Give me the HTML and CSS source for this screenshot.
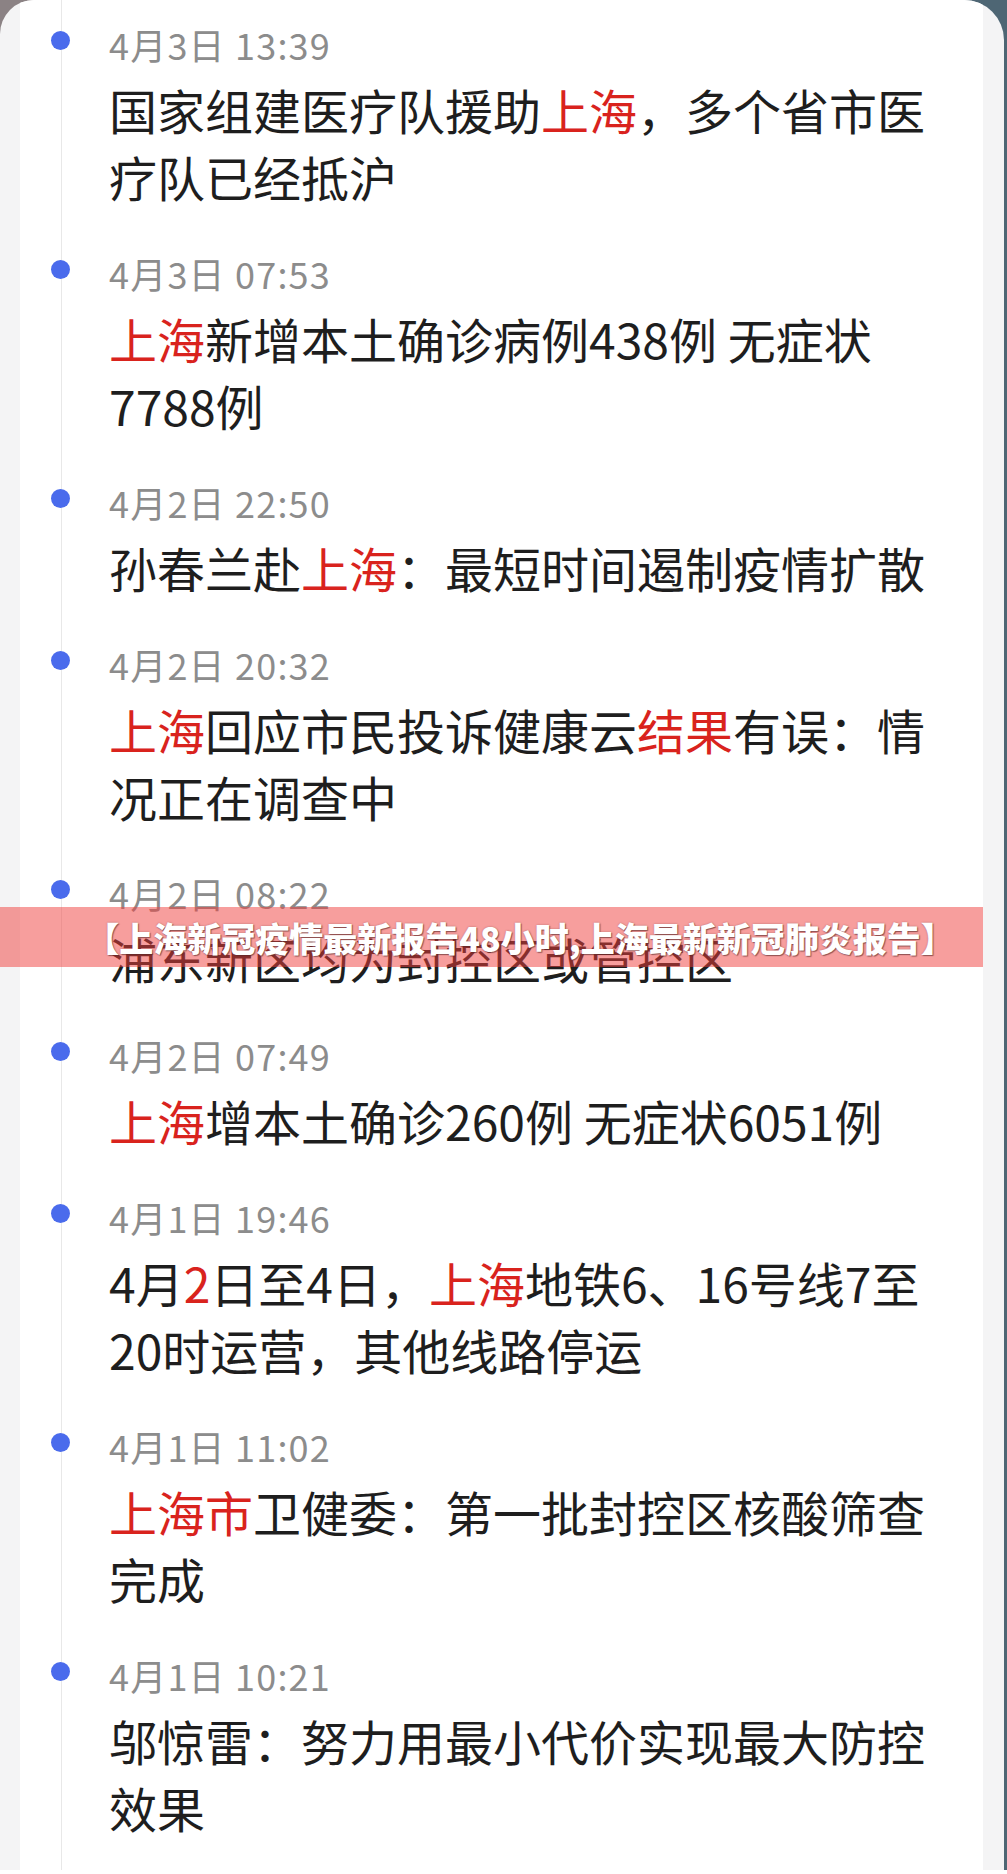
FILE: index.html
```html
<!DOCTYPE html>
<html lang="zh-CN">
<head>
<meta charset="utf-8">
<title>上海新冠疫情最新报告</title>
<link rel="stylesheet" href="styles.css">
</head>
<body>
<div class="screen">
  <div class="card">
    <ul class="list">
      <li class="item">
        <span class="dot"></span>
        <div class="date">4月3日 13:39</div>
        <div class="title">国家组建医疗队援助<span class="hl">上海</span>，多个省市医疗队已经抵沪</div>
      </li>
      <li class="item">
        <span class="dot"></span>
        <div class="date">4月3日 07:53</div>
        <div class="title"><span class="hl">上海</span>新增本土确诊病例438例 无症状7788例</div>
      </li>
      <li class="item">
        <span class="dot"></span>
        <div class="date">4月2日 22:50</div>
        <div class="title">孙春兰赴<span class="hl">上海</span>：最短时间遏制疫情扩散</div>
      </li>
      <li class="item">
        <span class="dot"></span>
        <div class="date">4月2日 20:32</div>
        <div class="title"><span class="hl">上海</span>回应市民投诉健康云<span class="hl">结果</span>有误：情况正在调查中</div>
      </li>
      <li class="item">
        <span class="dot"></span>
        <div class="date">4月2日 08:22</div>
        <div class="title">浦东新区均为封控区或管控区</div>
      </li>
      <li class="item">
        <span class="dot"></span>
        <div class="date">4月2日 07:49</div>
        <div class="title"><span class="hl">上海</span>增本土确诊260例 无症状6051例</div>
      </li>
      <li class="item">
        <span class="dot"></span>
        <div class="date">4月1日 19:46</div>
        <div class="title">4月<span class="hl">2</span>日至4日，<span class="hl">上海</span>地铁6、16号线7至20时运营，其他线路停运</div>
      </li>
      <li class="item">
        <span class="dot"></span>
        <div class="date">4月1日 11:02</div>
        <div class="title"><span class="hl">上海市</span>卫健委：第一批封控区核酸筛查完成</div>
      </li>
      <li class="item">
        <span class="dot"></span>
        <div class="date">4月1日 10:21</div>
        <div class="title">邬惊雷：努力用最小代价实现最大防控效果</div>
      </li>
    </ul>
  </div>
  <div class="banner">【上海新冠疫情最新报告48小时,上海最新新冠肺炎报告】</div>
</div>
</body>
</html>
```
FILE: styles.css
```css
html {
  background: #ffffff;
}
body {
  margin: 0;
  width: 1007px;
  background: linear-gradient(90deg, #8b8284 0, #8b8284 50%, #4e6674 50%, #4e6674 100%) top left / 100% 1870px no-repeat, #ffffff;
  font-family: "Noto Sans CJK SC", "Noto Sans", sans-serif;
}
.screen {
  position: relative;
  width: 1004px;
  height: 1870px;
  overflow: hidden;
  background: #f4f4f5;
  border-radius: 34px 40px 0 0;
  display: flex;
}
.card {
  margin-left: 20px;
  width: 963px;
  background: #ffffff;
}
.list {
  list-style: none;
  margin: 0 0 0 41px;
  padding: 22px 0 0 0;
  border-left: 1px solid #e8e8e8;
  min-height: 100%;
  box-sizing: border-box;
}
.item {
  position: relative;
  padding: 0 34px 41px 47px;
}
.dot {
  position: absolute;
  left: -11px;
  top: 9px;
  width: 19px;
  height: 19px;
  border-radius: 50%;
  background: #4a6bec;
}
.date {
  font-size: 36px;
  line-height: 44px;
  color: #8c8c8c;
  letter-spacing: 1.2px;
}
.title {
  margin-top: 10px;
  font-size: 48px;
  line-height: 67px;
  color: #1e1e1e;
}
.hl {
  color: #d9231d;
}
.banner {
  position: absolute;
  left: 0;
  top: 907px;
  width: 983px;
  height: 60px;
  box-sizing: border-box;
  padding-left: 57px;
  display: flex;
  align-items: center;
  justify-content: center;
  background: rgba(240, 62, 60, 0.5);
  color: #ffffff;
  font-size: 34px;
  font-weight: 900;
  white-space: nowrap;
  text-shadow: 1px 1px 1px rgba(90, 40, 40, 0.6), 0 0 2px rgba(90, 40, 40, 0.4);
}
```
